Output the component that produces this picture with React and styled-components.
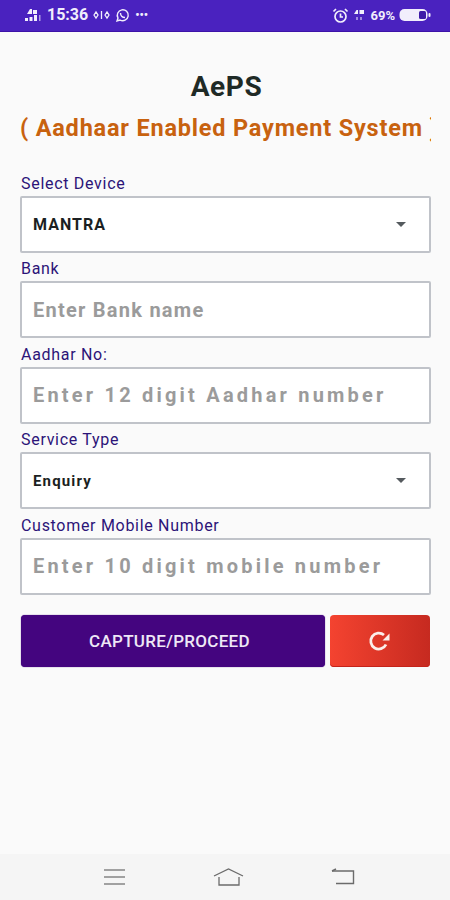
import styled, { createGlobalStyle } from "styled-components";

const GlobalStyle = createGlobalStyle`
  html, body { margin: 0; padding: 0; background: #fafafa; }
  body { font-family: Roboto, "Noto Sans", sans-serif; }
`;

const Screen = styled.div`
  width: 450px;
  height: 900px;
  display: flex;
  flex-direction: column;
  background: #fafafa;
  overflow: hidden;
`;

const StatusBar = styled.div`
  height: 32px;
  flex: none;
  display: flex;
  align-items: center;
  justify-content: space-between;
  padding: 0 19px 1px 24px;
  box-sizing: border-box;
  background: #4a22bf;
  border-bottom: 1px solid #3d12a8;
  color: #f1eefc;
`;

const StatusGroup = styled.div`
  display: flex;
  align-items: center;
  gap: ${({ $gap }) => $gap || 5}px;
`;

const StatusText = styled.span`
  font-size: ${({ $size }) => $size || 12}px;
  font-weight: 700;
  line-height: 1;
`;

const Content = styled.main`
  flex: 1;
  padding: 40px 19px 0 20px;
  display: flex;
  flex-direction: column;
`;

const Title = styled.h1`
  margin: 0;
  padding-left: 2px;
  text-align: center;
  font-size: 28px;
  line-height: 30px;
  font-weight: 700;
  letter-spacing: 0.6px;
  color: #1f2a26;
`;

const Subtitle = styled.h2`
  margin: 12px 0 0;
  height: 29px;
  width: 411px;
  overflow: hidden;
  white-space: nowrap;
  font-size: 23.5px;
  line-height: 29px;
  font-weight: 700;
  letter-spacing: 0.8px;
  color: #c8620f;
`;

const Form = styled.form`
  display: flex;
  flex-direction: column;
  gap: 7.5px;
  margin-top: 31.75px;
`;

const Field = styled.div`
  display: flex;
  flex-direction: column;
  gap: 3px;
`;

const Label = styled.label`
  padding-left: 1px;
  font-size: 16px;
  line-height: 18px;
  height: 18px;
  letter-spacing: 0.7px;
  color: #2c1478;
`;

const Box = styled.div`
  height: 57px;
  box-sizing: border-box;
  display: flex;
  align-items: center;
  justify-content: space-between;
  padding: 0 23px 0 11px;
  background: #fff;
  border: 2px solid #c0c3c9;
  border-radius: 2px;
`;

const SelectValue = styled.span`
  font-size: ${({ $size }) => $size || 16}px;
  font-weight: 700;
  letter-spacing: ${({ $spacing }) => $spacing || 1.05}px;
  color: #1b1f22;
`;

const Placeholder = styled.span`
  font-size: 20px;
  font-weight: 700;
  letter-spacing: ${({ $spacing }) => $spacing || 1.25}px;
  white-space: nowrap;
  color: #9b9b9b;
`;

const Caret = styled.span`
  width: 0;
  height: 0;
  border-left: 5.5px solid transparent;
  border-right: 5.5px solid transparent;
  border-top: 5.5px solid #555a5e;
`;

const Actions = styled.div`
  display: flex;
  gap: 5px;
  margin: 20.5px 0 0 1px;
`;

const PrimaryButton = styled.button`
  width: 304px;
  height: 52px;
  padding: 0 7px 0 0;
  border: 0;
  border-radius: 4px;
  background: #44057f;
  color: #eee8f6;
  font-family: inherit;
  font-size: 17px;
  font-weight: 500;
  letter-spacing: 0.3px;
  box-shadow: 0 0 1px #44057f;
`;

const ResetButton = styled.button`
  width: 100px;
  height: 52px;
  padding: 0;
  border: 0;
  border-radius: 4px;
  display: flex;
  align-items: center;
  justify-content: center;
  background: linear-gradient(90deg, #f44330, #c62a20);
  color: #fbeeea;
  box-shadow: inset 0 -1px 0 #c4231a;
`;

const NavBar = styled.nav`
  height: 46px;
  flex: none;
  display: flex;
  align-items: center;
  justify-content: space-between;
  padding: 0 95px 0 102px;
  background: #f5f5f5;
  color: #6b6b6b;
`;

const SignalIcon = () => (
  <svg width="18" height="16" viewBox="0 0 18 16" fill="currentColor">
    <rect x="1" y="11" width="3" height="3" />
    <rect x="5.5" y="10" width="3" height="4" />
    <rect x="10" y="8" width="3" height="6" />
    <rect x="15" y="8" width="1.5" height="6" opacity="0.6" />
    <path d="M3 7 L6 2 L8 2 L8 7 Z M9 3 h4 v4 h-4 z" />
  </svg>
);

const VibrateIcon = () => (
  <svg width="17" height="12" viewBox="0 0 17 12" fill="none" stroke="currentColor" strokeWidth="1.3">
    <path d="M1 6 L3 3 L5 6 L3 9 Z M12 6 L14 3 L16 6 L14 9 Z" />
    <path d="M8.5 2 V10" />
  </svg>
);

const WhatsappIcon = () => (
  <svg width="15" height="15" viewBox="0 0 15 15" fill="none" stroke="currentColor" strokeWidth="1.4">
    <path d="M2 13 L3 10 A5.5 5.5 0 1 1 5 12 Z" />
    <path d="M5.5 5 C5.5 8 7.5 9.5 10 9.5" />
  </svg>
);

const AlarmIcon = () => (
  <svg width="17" height="17" viewBox="0 0 17 17" fill="none" stroke="currentColor" strokeWidth="1.7">
    <circle cx="8.5" cy="9.5" r="5.5" />
    <path d="M8.5 6.5 V10 H11 M1.5 4.5 L4 2 M15.5 4.5 L13 2" />
  </svg>
);

const DataIcon = () => (
  <svg width="13" height="13" viewBox="0 0 13 13" fill="currentColor">
    <path d="M1 5 L3.5 1 H5 V5 Z M6.5 1 H11 V5 H6.5 Z" />
    <rect x="3" y="8" width="2" height="3" opacity="0.5" />
    <rect x="7" y="8" width="2" height="3" opacity="0.5" />
  </svg>
);

const BatteryIcon = () => (
  <svg width="32" height="14" viewBox="0 0 32 14">
    <rect x="0.5" y="1" width="28" height="12" rx="5" fill="#f1eefc" />
    <rect x="20" y="3" width="7" height="8" rx="1.5" fill="#3d1aa8" />
    <rect x="29.5" y="5" width="2" height="4" rx="1" fill="#f1eefc" />
  </svg>
);

const RefreshIcon = () => (
  <svg width="24" height="22" viewBox="0 0 24 22" fill="none">
    <path d="M18 14.5 A8 8 0 1 1 16 5" stroke="currentColor" strokeWidth="2.8" />
    <path d="M21.5 3.5 V10.5 H14.5 Z" fill="currentColor" />
  </svg>
);

const MenuIcon = () => (
  <svg width="24" height="18" viewBox="0 0 24 18" stroke="currentColor" strokeWidth="1.6" opacity="0.8">
    <path d="M2 2 H23 M2 9 H23 M2 16 H23" />
  </svg>
);

const HomeIcon = () => (
  <svg width="32" height="18" viewBox="0 0 32 18" fill="none" stroke="currentColor" strokeWidth="1.3">
    <path d="M1 8 L15.5 1 L30 8" />
    <path d="M6 9 V17 H26 V9" />
  </svg>
);

const BackIcon = () => (
  <svg width="24" height="18" viewBox="0 0 24 18" fill="none" stroke="currentColor" strokeWidth="1.4">
    <path d="M1 3 H22.5 V15.5 H5" />
    <path d="M5 1 L1 3" />
  </svg>
);

const App = () => (
  <Screen>
    <GlobalStyle />
    <StatusBar>
      <StatusGroup>
        <SignalIcon />
        <StatusText $size={16}>15:36</StatusText>
        <VibrateIcon />
        <WhatsappIcon />
        <StatusText>•••</StatusText>
      </StatusGroup>
      <StatusGroup $gap={4}>
        <AlarmIcon />
        <DataIcon />
        <StatusText $size={13}>69%</StatusText>
        <BatteryIcon />
      </StatusGroup>
    </StatusBar>
    <Content>
      <Title>AePS</Title>
      <Subtitle>( Aadhaar Enabled Payment System )</Subtitle>
      <Form>
        <Field>
          <Label>Select Device</Label>
          <Box>
            <SelectValue>MANTRA</SelectValue>
            <Caret />
          </Box>
        </Field>
        <Field>
          <Label>Bank</Label>
          <Box>
            <Placeholder>Enter Bank name</Placeholder>
          </Box>
        </Field>
        <Field>
          <Label>Aadhar No:</Label>
          <Box>
            <Placeholder $spacing={3.2}>Enter 12 digit Aadhar number</Placeholder>
          </Box>
        </Field>
        <Field>
          <Label>Service Type</Label>
          <Box>
            <SelectValue $size={15} $spacing={1.15}>Enquiry</SelectValue>
            <Caret />
          </Box>
        </Field>
        <Field>
          <Label>Customer Mobile Number</Label>
          <Box>
            <Placeholder $spacing={3.2}>Enter 10 digit mobile number</Placeholder>
          </Box>
        </Field>
      </Form>
      <Actions>
        <PrimaryButton type="button">CAPTURE/PROCEED</PrimaryButton>
        <ResetButton type="button" aria-label="Refresh">
          <RefreshIcon />
        </ResetButton>
      </Actions>
    </Content>
    <NavBar>
      <MenuIcon />
      <HomeIcon />
      <BackIcon />
    </NavBar>
  </Screen>
);

export default App;
